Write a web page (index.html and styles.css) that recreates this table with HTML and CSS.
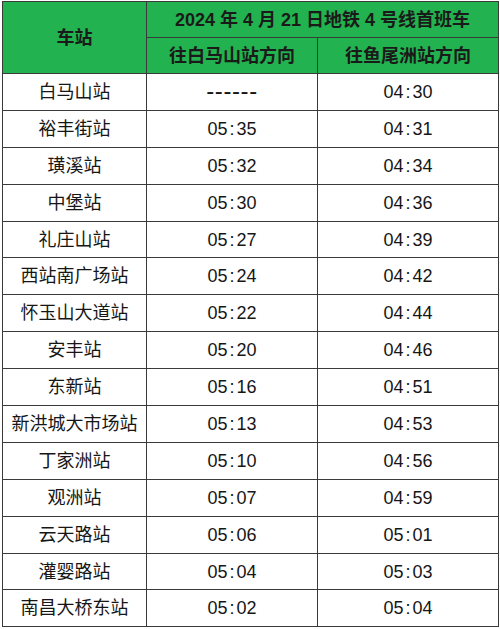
FILE: index.html
```html
<!DOCTYPE html>
<html lang="zh-CN">
<head>
<meta charset="utf-8">
<title>2024 年 4 月 21 日地铁 4 号线首班车</title>
<link rel="stylesheet" href="styles.css">
</head>
<body>
<div class="wrap">
<table class="tt">
  <colgroup>
    <col class="c1"><col class="c2"><col class="c3">
  </colgroup>
  <thead>
    <tr class="h1">
      <th rowspan="2">车站</th>
      <th colspan="2">2024 年 4 月 21 日地铁 4 号线首班车</th>
    </tr>
    <tr class="h2">
      <th>往白马山站方向</th>
      <th>往鱼尾洲站方向</th>
    </tr>
  </thead>
  <tbody>
    <tr><td>白马山站</td><td><span class="dash">------</span></td><td>04<span class="col">:</span>30</td></tr>
    <tr><td>裕丰街站</td><td>05<span class="col">:</span>35</td><td>04<span class="col">:</span>31</td></tr>
    <tr><td>璜溪站</td><td>05<span class="col">:</span>32</td><td>04<span class="col">:</span>34</td></tr>
    <tr><td>中堡站</td><td>05<span class="col">:</span>30</td><td>04<span class="col">:</span>36</td></tr>
    <tr><td>礼庄山站</td><td>05<span class="col">:</span>27</td><td>04<span class="col">:</span>39</td></tr>
    <tr><td>西站南广场站</td><td>05<span class="col">:</span>24</td><td>04<span class="col">:</span>42</td></tr>
    <tr><td>怀玉山大道站</td><td>05<span class="col">:</span>22</td><td>04<span class="col">:</span>44</td></tr>
    <tr><td>安丰站</td><td>05<span class="col">:</span>20</td><td>04<span class="col">:</span>46</td></tr>
    <tr><td>东新站</td><td>05<span class="col">:</span>16</td><td>04<span class="col">:</span>51</td></tr>
    <tr><td>新洪城大市场站</td><td>05<span class="col">:</span>13</td><td>04<span class="col">:</span>53</td></tr>
    <tr><td>丁家洲站</td><td>05<span class="col">:</span>10</td><td>04<span class="col">:</span>56</td></tr>
    <tr><td>观洲站</td><td>05<span class="col">:</span>07</td><td>04<span class="col">:</span>59</td></tr>
    <tr><td>云天路站</td><td>05<span class="col">:</span>06</td><td>05<span class="col">:</span>01</td></tr>
    <tr><td>灌婴路站</td><td>05<span class="col">:</span>04</td><td>05<span class="col">:</span>03</td></tr>
    <tr><td>南昌大桥东站</td><td>05<span class="col">:</span>02</td><td>05<span class="col">:</span>04</td></tr>
  </tbody>
</table>
</div>
</body>
</html>
```
FILE: styles.css
```css
html, body {
  margin: 0;
  padding: 0;
  background: #ffffff;
}
.wrap {
  padding: 1px 2px 0 2px;
}
.tt {
  width: 496px;
  border-collapse: collapse;
  table-layout: fixed;
  font-family: "Liberation Sans", "Noto Sans CJK SC", sans-serif;
  font-size: 18px;
  color: #161616;
}
.c1 { width: 144px; }
.c2 { width: 171px; }
.c3 { width: 181px; }
.tt th, .tt td {
  border: 1px solid #3a3a3a;
  padding: 0;
  text-align: center;
  vertical-align: middle;
  line-height: 20px;
  white-space: nowrap;
}
.tt th {
  background: #22b24f;
  font-weight: bold;
  color: #1a1a1a;
}
.h1 { height: 36px; }
.h2 { height: 36px; }
.tt tbody tr { height: 36.9px; }
.col {
  margin: 0 2px;
}
.dash {
  font-size: 24px;
  letter-spacing: 0.6px;
  line-height: 20px;
}
```
